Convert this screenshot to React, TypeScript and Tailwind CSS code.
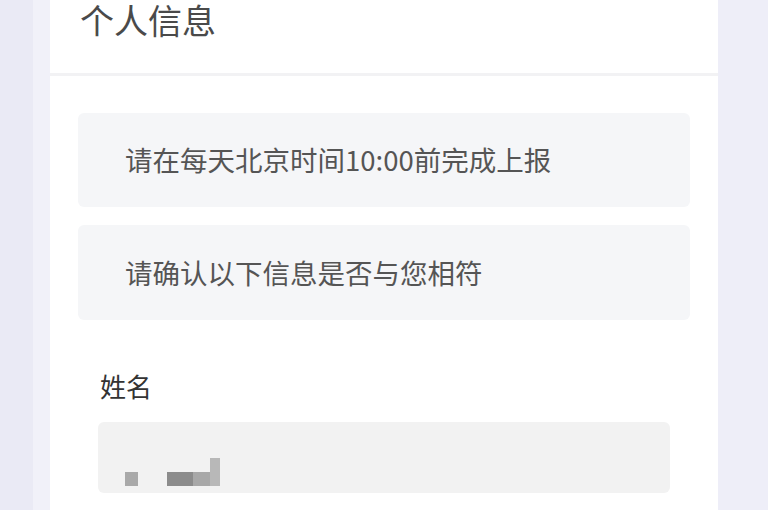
const cjk = { fontFamily: '"Noto Sans CJK SC", "Noto Sans", sans-serif' };

const NoticeBox = ({ text, tall }: { text: string; tall?: boolean }) => (
  <div
    className={`flex items-center rounded-md bg-[#f5f6f8] pl-[47px] text-[27.5px] text-[#555] ${
      tall ? "h-[95px]" : "h-[94px]"
    }`}
  >
    {text}
  </div>
);

export default function App() {
  return (
    <div className="flex min-h-screen bg-[#eeeef8]" style={cjk}>
      {/* left edge */}
      <div className="w-[33px] shrink-0 bg-[#eaeaf5]" />
      <div className="w-[17px] shrink-0 bg-[#f1f1f9]" />

      {/* card */}
      <div className="w-[668px] shrink-0 bg-white">
        <div className="h-[73px] px-[30px]">
          <h1 className="text-[34px] leading-[40px] text-[#4a4a4a]">个人信息</h1>
        </div>
        <div className="h-[3px] bg-[#f2f2f4]" />

        <div className="px-[28px] pt-[37px] pb-8">
          <div className="flex flex-col gap-[18px]">
            <NoticeBox text="请在每天北京时间10:00前完成上报" />
            <NoticeBox text="请确认以下信息是否与您相符" tall />
          </div>

          <div className="mt-[53px] pl-[22px] text-[26px] leading-[26px] text-[#333]">姓名</div>

          {/* name input with masked value */}
          <div className="mx-[20px] mt-[23px] h-[71px] rounded-md bg-[#f2f2f2]">
            <div className="flex h-full items-end pb-[7px] pl-[27px]">
              <div className="flex items-end gap-[29px]">
                <div className="h-[14px] w-[13px] bg-[#a9a9a9]" />
                <div className="flex items-end">
                  <div className="h-[14px] w-[26px] bg-[#8c8c8c]" />
                  <div className="h-[14px] w-[17px] bg-[#a8a8a8]" />
                  <div className="h-[28px] w-[10px] bg-[#b8b8b8]" />
                </div>
              </div>
            </div>
          </div>
        </div>
      </div>
    </div>
  );
}
